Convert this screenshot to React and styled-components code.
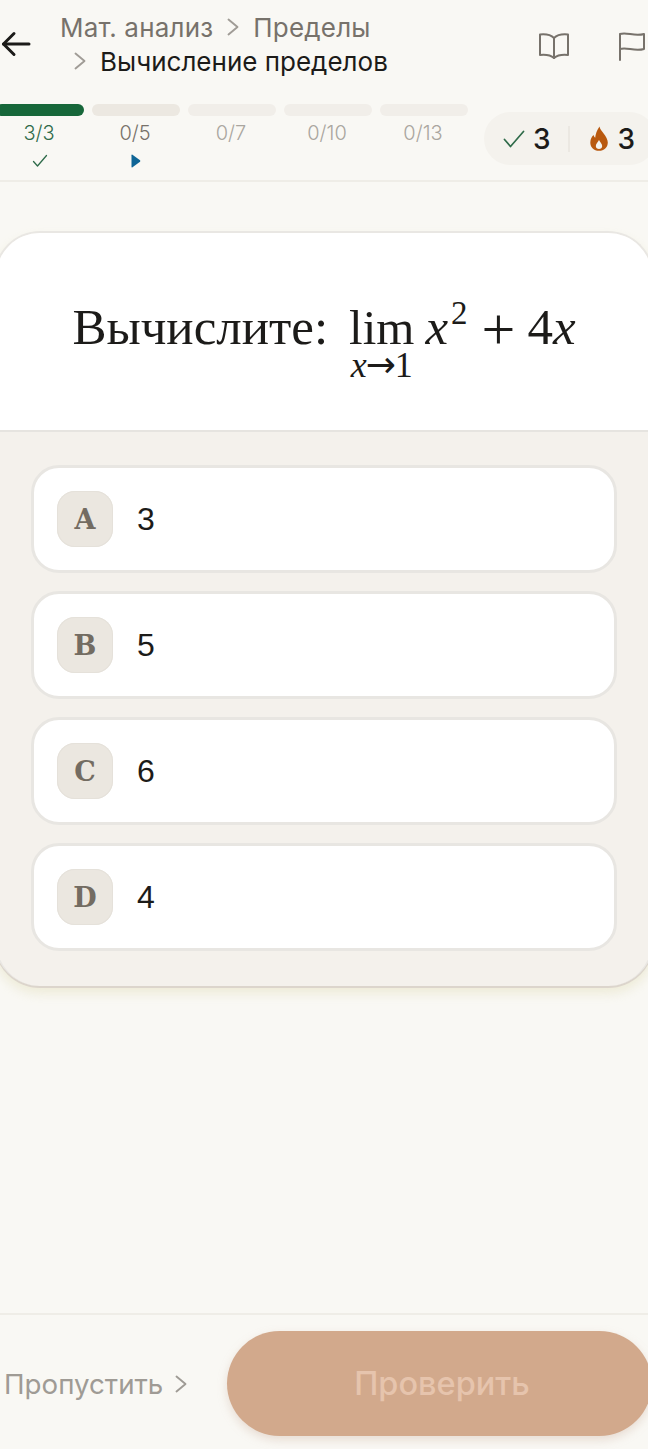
import React from 'react'
import styled, { createGlobalStyle } from 'styled-components';

const SANS = '"Inter", "Noto Sans", sans-serif';
const SERIF = '"Liberation Serif", serif';

const steps = [
  { label: '3/3', fill: '#17673a', color: '#2f6b4a', marker: 'check' },
  { label: '0/5', fill: '#ece8e1', color: '#77716a', marker: 'play' },
  { label: '0/7', fill: '#f1eee9', color: '#aaa69f' },
  { label: '0/10', fill: '#f1eee9', color: '#aaa69f' },
  { label: '0/13', fill: '#f1eee9', color: '#aaa69f' },
];

const options = [
  { letter: 'A', value: '3' },
  { letter: 'B', value: '5' },
  { letter: 'C', value: '6' },
  { letter: 'D', value: '4' },
];

const Chevron = ({ size = 12, color = '#a09c96' }) => (
  <svg width={size} height={size * 1.5} viewBox="0 0 12 18" fill="none" stroke={color} strokeWidth="1.9" strokeLinecap="round" strokeLinejoin="round">
    <path d="M1.500 1.500 L10.500 9 L1.500 16.500" />
  </svg>
);

const App = () => {
  return (
    <Page>
      <GlobalStyle />
      <Header>
        <TopRow>
          <BackButton>
            <svg width="30" height="26" viewBox="0 0 30 26" fill="none" stroke="#1c1b19" strokeWidth="3" strokeLinecap="round" strokeLinejoin="round">
              <path d="M2.5 13 H28" />
              <path d="M13 2.5 L2.5 13 L13 23.5" />
            </svg>
          </BackButton>
          <Crumbs>
            <CrumbLine>
              <Crumb>Мат. анализ</Crumb>
              <Chevron />
              <Crumb>Пределы</Crumb>
            </CrumbLine>
            <CrumbLine $indent>
              <Chevron />
              <Crumb $current>Вычисление пределов</Crumb>
            </CrumbLine>
          </Crumbs>
          <Tools>
            <svg width="32" height="28" viewBox="0 0 32 28" fill="none" stroke="#77726b" strokeWidth="2" strokeLinejoin="round" strokeLinecap="round">
              <path d="M16 6 C12.500 2.500 7 2 2 2.500 V23 C7 22.500 12.500 23 16 26 C19.500 23 25 22.500 30 23 V2.500 C25 2 19.500 2.500 16 6 Z" />
              <path d="M16 6 V26" />
            </svg>
            <svg width="28" height="30" viewBox="0 0 28 30" fill="none" stroke="#77726b" strokeWidth="2" strokeLinejoin="round" strokeLinecap="round">
              <path d="M2 29 V3 C9 0.500 16 6 26 3 V18 C16 21 9 15.500 2 18" />
            </svg>
          </Tools>
        </TopRow>
        <ProgressRow>
          <Steps>
            {steps.map((step) => (
              <Step key={step.label}>
                <Bar $fill={step.fill} />
                <StepLabel $color={step.color}>{step.label}</StepLabel>
                <Marker>
                  {step.marker === 'check' && (
                    <svg width="16" height="14" viewBox="0 0 16 14" fill="none" stroke="#2f6b4a" strokeWidth="1.300" strokeLinecap="round" strokeLinejoin="round">
                      <path d="M1.500 7.500 L5.500 12 L14.500 1.500" />
                    </svg>
                  )}
                  {step.marker === 'play' && (
                    <svg width="10" height="14" viewBox="0 0 10 14" fill="#0f6596">
                      <path d="M0.500 1.200 Q0.500 0.300 1.500 0.800 L9 6.200 Q9.800 7 9 7.800 L1.500 13.200 Q0.500 13.700 0.500 12.800 Z" />
                    </svg>
                  )}
                </Marker>
              </Step>
            ))}
          </Steps>
          <Stats>
            <Stat $gap="8px">
              <svg width="22" height="18" viewBox="0 0 22 18" fill="none" stroke="#2f6b4a" strokeWidth="1.700" strokeLinecap="round" strokeLinejoin="round">
                <path d="M1.500 9.500 L7.500 16.500 L20.500 1.500" />
              </svg>
              <StatValue>3</StatValue>
            </Stat>
            <StatDivider />
            <Stat $gap="10px">
              <svg width="18" height="25" viewBox="0 0 18 25" fill="#b9590f">
                <path fillRule="evenodd" d="M9.500 0.500 C10 5 17.800 10 17.800 16.500 C17.800 21.500 14 24.800 9 24.800 C4 24.800 0.300 21.500 0.300 16.500 C0.300 13 2 10.500 3.500 9 C4 10.500 4.500 11.300 5.200 11.800 C5.500 8 7 4 9.500 0.500 Z M9 14 C8 16.200 5.800 17.800 5.800 20 C5.800 21.800 7.200 23 9 23 C10.800 23 12.200 21.800 12.200 20 C12.200 17.800 10 16.200 9 14 Z" />
              </svg>
              <StatValue>3</StatValue>
            </Stat>
          </Stats>
        </ProgressRow>
      </Header>

      <Main>
        <Card>
          <Question>
            <QuestionText>Вычислите:</QuestionText>
            <Limit>
              <LimWord>lim</LimWord>
              <LimSub><i>x</i><Arrow>→</Arrow>1</LimSub>
            </Limit>
            <MathLine>
              <i>x</i><Sup>2</Sup><Plus>+</Plus>4<i>x</i>
            </MathLine>
          </Question>
          <Options>
            {options.map((option) => (
              <Option key={option.letter}>
                <Badge>{option.letter}</Badge>
                <OptionValue>{option.value}</OptionValue>
              </Option>
            ))}
          </Options>
        </Card>
      </Main>

      <Footer>
        <SkipButton>
          Пропустить
          <Chevron color="#9f9b95" />
        </SkipButton>
        <CheckButton>Проверить</CheckButton>
      </Footer>
    </Page>
  );
};

export default App;

const GlobalStyle = createGlobalStyle`
  html, body {
    margin: 0;
    padding: 0;
    background: #f9f8f4;
  }
  * {
    box-sizing: border-box;
  }
`;

const Page = styled.div`
  width: 648px;
  height: 1449px;
  display: flex;
  flex-direction: column;
  overflow: hidden;
  background: #f9f8f4;
  font-family: ${SANS};
`;

const Header = styled.header`
  height: 182px;
  flex-shrink: 0;
  border-bottom: 2px solid #efede7;
`;

const TopRow = styled.div`
  height: 104px;
  display: flex;
  align-items: flex-start;
`;

const BackButton = styled.div`
  width: 60px;
  padding: 31px 0 0 1px;
`;

const Crumbs = styled.div`
  width: 460px;
  padding-top: 10px;
`;

const CrumbLine = styled.div`
  height: 34px;
  display: flex;
  align-items: center;
  gap: 14px;
  padding-left: ${(p) => (p.$indent ? '14px' : '0')};
`;

const Crumb = styled.span`
  font-size: 26px;
  letter-spacing: ${(p) => (p.$current ? '0' : '0.2px')};
  color: ${(p) => (p.$current ? '#1c1b19' : '#77726b')};
`;

const Tools = styled.div`
  display: flex;
  align-items: center;
  gap: 48px;
  padding: 31px 0 0 18px;
`;

const ProgressRow = styled.div`
  display: flex;
  align-items: flex-start;
  margin-left: -4px;
  gap: 16px;
`;

const Steps = styled.div`
  display: grid;
  grid-template-columns: repeat(5, 88px);
  gap: 8px;
`;

const Step = styled.div`
  display: flex;
  flex-direction: column;
  align-items: center;
`;

const Bar = styled.div`
  width: 100%;
  height: 12px;
  border-radius: 6px;
  background: ${(p) => p.$fill};
`;

const StepLabel = styled.span`
  margin: 5px 2px 0 0;
  height: 25px;
  line-height: 25px;
  font-size: 20px;
  font-weight: 300;
  color: ${(p) => p.$color};
`;

const Marker = styled.div`
  height: 14px;
  margin-top: 8px;
  display: flex;
  align-items: center;
`;

const Stats = styled.div`
  width: 172px;
  height: 53px;
  margin-top: 8px;
  flex-shrink: 0;
  display: flex;
  align-items: center;
  padding: 0 14px 0 19px;
  border-radius: 27px;
  background: #f4f2ed;
`;

const Stat = styled.div`
  display: flex;
  align-items: center;
  gap: ${(p) => p.$gap};
`;

const StatValue = styled.span`
  font-size: 28px;
  font-weight: 500;
  color: #1c1b19;
`;

const StatDivider = styled.div`
  width: 2px;
  height: 26px;
  margin: 0 20px 0 17px;
  background: #ebe8e2;
`;

const Main = styled.main`
  flex: 1;
  padding-top: 49px;
`;

const Card = styled.section`
  width: 660px;
  margin-left: -6px;
  border: 2px solid #e9e7e3;
  border-bottom: none;
  border-radius: 46px;
  overflow: hidden;
  background: #f4f1ec;
  box-shadow: 0 2px 0 #dcd5cc, 0 7px 12px rgba(220, 215, 170, 0.4);
`;

const Question = styled.div`
  height: 199px;
  display: flex;
  align-items: baseline;
  justify-content: center;
  gap: 21px;
  padding: 64px 0 0 0;
  background: #fff;
  border-bottom: 2px solid #e6e4e0;
  color: #1c1b19;
  font-family: ${SERIF};
`;

const QuestionText = styled.span`
  font-size: 51px;
  line-height: 60px;
`;

const Limit = styled.span`
  display: inline-flex;
  flex-direction: column;
  align-items: center;
`;

const LimWord = styled.span`
  font-size: 49px;
  line-height: 44px;
`;

const LimSub = styled.span`
  font-size: 36px;
  line-height: 30px;
  white-space: nowrap;
`;

const Arrow = styled.span`
  font-family: "DejaVu Sans", sans-serif;
  font-size: 36px;
  margin: 0 -1px;
`;

const MathLine = styled.span`
  display: inline-flex;
  align-items: baseline;
  margin-left: -10px;
  font-size: 51px;
`;

const Sup = styled.sup`
  font-size: 33px;
  line-height: 0;
  position: relative;
  top: -20px;
  vertical-align: baseline;
  margin-left: 3px;
`;

const Plus = styled.span`
  position: relative;
  top: 5px;
  margin: 0 12px 0 14px;
  font-size: 60px;
  line-height: 0;
  font-weight: 400;
`;

const Options = styled.div`
  display: flex;
  flex-direction: column;
  gap: 18px;
  padding: 33px 35px 35px;
`;

const Option = styled.div`
  height: 108px;
  display: flex;
  align-items: center;
  gap: 24px;
  padding-left: 23px;
  background: #fff;
  border: 3px solid #e8e6e2;
  border-radius: 28px;
`;

const Badge = styled.div`
  width: 56px;
  height: 56px;
  display: flex;
  align-items: center;
  justify-content: center;
  border-radius: 18px;
  background: #ebe7e0;
  box-shadow: inset 0 0 0 1px #e5e1da;
  font-family: "DejaVu Serif", serif;
  font-size: 27px;
  font-weight: 700;
  color: #736c62;
`;

const OptionValue = styled.span`
  font-family: "Liberation Sans", sans-serif;
  font-size: 32px;
  color: #1c1b19;
`;

const Footer = styled.footer`
  height: 136px;
  flex-shrink: 0;
  display: flex;
  align-items: flex-start;
  justify-content: space-between;
  padding-top: 16px;
  border-top: 2px solid #efede7;
`;

const SkipButton = styled.div`
  height: 105px;
  display: flex;
  align-items: center;
  gap: 12px;
  padding-left: 4px;
  font-size: 27.7px;
  color: #9f9b95;
`;

const CheckButton = styled.div`
  width: 425px;
  height: 105px;
  margin-right: -4px;
  padding-left: 5px;
  display: flex;
  align-items: center;
  justify-content: center;
  border-radius: 53px;
  background: #d2a98c;
  box-shadow: 0 4px 10px rgba(200, 170, 150, 0.35);
  font-size: 32.500px;
  font-weight: 500;
  color: #e6c4ad;
`;
